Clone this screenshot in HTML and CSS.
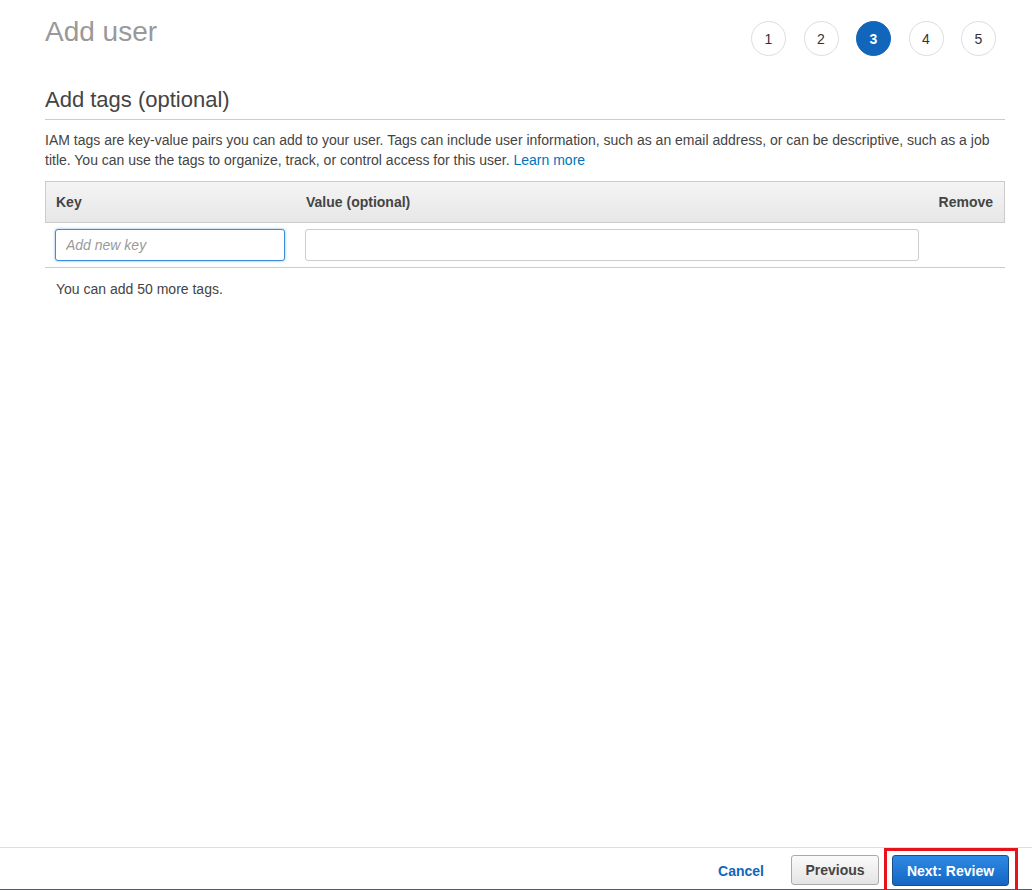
FILE: index.html
```html
<!DOCTYPE html>
<html lang="en">
<head>
<meta charset="utf-8">
<title>Add user</title>
<link rel="stylesheet" href="styles.css">
</head>
<body>
<div class="page">
  <main class="content">
    <div class="top">
      <h1 class="title">Add user</h1>
      <ol class="steps">
        <li class="step">1</li>
        <li class="step">2</li>
        <li class="step active">3</li>
        <li class="step">4</li>
        <li class="step">5</li>
      </ol>
    </div>
    <h2 class="section-title">Add tags (optional)</h2>
    <p class="desc">IAM tags are key-value pairs you can add to your user. Tags can include user information, such as an email address, or can be descriptive, such as a job title. You can use the tags to organize, track, or control access for this user. <a class="link" href="#">Learn more</a></p>
    <div class="tags-table">
      <div class="thead">
        <div class="th">Key</div>
        <div class="th">Value (optional)</div>
        <div class="th th-remove">Remove</div>
      </div>
      <div class="trow">
        <div class="td"><input class="input input-focus" type="text" placeholder="Add new key"></div>
        <div class="td"><input class="input" type="text"></div>
        <div class="td"></div>
      </div>
    </div>
    <p class="remaining">You can add 50 more tags.</p>
  </main>
  <footer class="footer">
    <a class="cancel" href="#">Cancel</a>
    <button class="btn btn-secondary" type="button">Previous</button>
    <span class="highlight"><button class="btn btn-primary" type="button">Next: Review</button></span>
  </footer>
</div>
</body>
</html>
```
FILE: styles.css
```css
* { box-sizing: border-box; }
html, body { margin: 0; padding: 0; height: 100%; }
body {
  font-family: Arial, "Liberation Sans", Helvetica, sans-serif;
  font-size: 14px;
  color: #444;
  background: #fff;
}
.page {
  height: 100vh;
  display: flex;
  flex-direction: column;
  overflow: hidden;
}
.content {
  flex: 1;
  padding: 0 27px 0 45px;
}
.top {
  display: flex;
  justify-content: space-between;
  align-items: flex-start;
}
.title {
  margin: 15px 0 0 0;
  font-size: 28px;
  font-weight: normal;
  line-height: 34px;
  color: #999;
}
.steps {
  list-style: none;
  margin: 21px 9px 0 0;
  padding: 0;
  display: flex;
  gap: 17.5px;
}
.step {
  width: 35px;
  height: 35px;
  border-radius: 50%;
  border: 1px solid #ddd;
  display: flex;
  align-items: center;
  justify-content: center;
  font-size: 14px;
  color: #333;
  background: #fff;
}
.step.active {
  background: #1166bb;
  border-color: #1166bb;
  color: #fff;
  font-weight: bold;
}
.section-title {
  margin: 30px 0 0 0;
  font-size: 22px;
  font-weight: normal;
  line-height: 28px;
  color: #444;
  padding-bottom: 5px;
  border-bottom: 1px solid #ccc;
}
.desc {
  margin: 10px 0 0 0;
  line-height: 20px;
  color: #444;
}
.link { color: #0073bb; text-decoration: none; }
.tags-table { margin-top: 11px; }
.thead, .trow {
  display: grid;
  grid-template-columns: 250px 1fr 76px;
}
.thead {
  height: 42px;
  align-items: center;
  border: 1px solid #ccc;
  background: linear-gradient(#f4f4f4, #e7e7e7);
  font-weight: bold;
  color: #444;
}
.th { padding: 0 10px; }
.th-remove { text-align: right; padding-right: 11px; }
.trow {
  padding: 6px 0 6px 0;
  border-bottom: 1px solid #ccc;
}
.td { padding: 0 10px; }
.input {
  display: block;
  width: 100%;
  height: 32px;
  border: 1px solid #ccc;
  border-radius: 3px;
  padding: 0 10px;
  font-family: inherit;
  font-size: 14px;
  color: #444;
  background: #fff;
  outline: none;
}
.input::placeholder { color: #999; font-style: italic; }
.input-focus {
  border-color: #3b8cd6;
  box-shadow: 0 0 3px rgba(59, 140, 214, 0.6);
}
.remaining {
  margin: 13px 0 0 11px;
  line-height: 16px;
}
.footer {
  flex: none;
  display: flex;
  justify-content: flex-end;
  align-items: flex-start;
  height: 43px;
  padding: 7px 14px 0 0;
  border-top: 1px solid #ddd;
  border-bottom: 1px solid #545b64;
}
.cancel {
  color: #1166bb;
  font-weight: bold;
  text-decoration: none;
  margin: 8px 27px 0 0;
}
.btn {
  font-family: inherit;
  font-size: 14px;
  font-weight: bold;
  height: 31px;
  border-radius: 3px;
  cursor: pointer;
}
.btn-secondary {
  width: 88px;
  height: 30px;
  color: #444;
  border: 1px solid #aaa;
  background: linear-gradient(#fafafa, #e4e4e4);
  margin-right: 5px;
}
.highlight {
  display: block;
  margin-top: -7px;
  padding: 4px 6px 4px 5px;
  border: 3px solid #e8121c;
}
.btn-primary {
  display: block;
  width: 117px;
  color: #fff;
  border: 1px solid #1a4f8a;
  background: linear-gradient(#2d8ae6, #1466c2);
}
```
